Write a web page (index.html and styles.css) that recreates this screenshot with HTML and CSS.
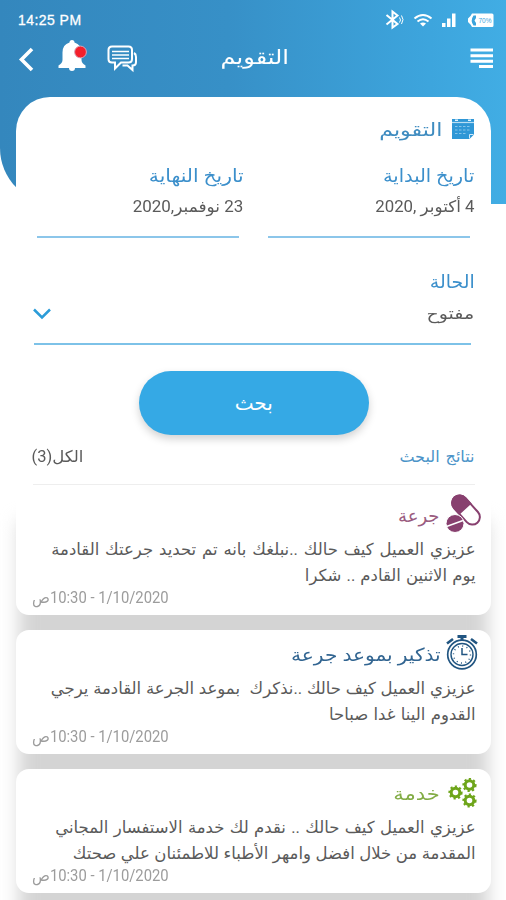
FILE: index.html
```
<!DOCTYPE html>
<html lang="ar" dir="rtl">
<head>
<meta charset="utf-8">
<title>التقويم</title>
<link rel="stylesheet" href="styles.css">
</head>
<body>
<div class="screen">
  <header class="hero">
    <div class="status">
      <svg class="status-icons" width="110" height="20" viewBox="384 10 110 20" fill="#fff">
        <path d="M386.500 15 397.500 24 392.500 27.500V11.500L397.500 15.500 386.500 24.500" fill="none" stroke="#fff" stroke-width="2"/>
        <path d="M399.500 17.500q2 2.500 0 5M401.500 15.500q3 4 0 8.500" fill="none" stroke="#fff" stroke-width="1"/>
        <path d="M414.500 18.500q8.500-7 17 0M417.500 21.500q5.500-4.500 11 0" fill="none" stroke="#fff" stroke-width="2"/>
        <path d="M420 23.500q3-2 6 0l-3 3z"/>
        <path d="M442 23h3.500v4H442zM447 18.500h3.500V27H447zM452 13.500h3.500V27H452z"/>
        <path d="M472 13.500h20a1.500 1.500 0 0 1 1.500 1.500v10.500a1.500 1.500 0 0 1-1.500 1.500h-20l-1.500-2.500-2.500-2.500v-3.500l2.500-2.500z"/>
        <path d="M473.500 15.500h2.500v2.500l-1.500 2.500 1.500 2.500v2.500h-2.500q-3.500-5 0-10z" fill="#3ba4dc"/>
        <text x="485" y="22.800" font-size="6.500" text-anchor="middle" fill="#3ba4dc" direction="ltr" font-family="Liberation Sans, sans-serif">70%</text>
      </svg>
      <span class="clock">14:25 PM</span>
    </div>
    <nav class="bar">
      <svg width="23" height="21" viewBox="0 0 23 21" fill="#fff"><path d="M.500.500h22.500v3H.500zM.500 6.200h22.500v3H.500zM.500 11.700h22.500v3H.500zM9 17h14v3H9z"/></svg>
      <h1 class="bar-title"><span>التقويم</span></h1>
      <div class="actions">
        <svg width="30" height="30" viewBox="107 41 30 30" fill="none" stroke="#fff">
          <path d="M112 43.500h16.500q3.500 0 3.500 3.500v9q0 3.500-3.500 3.500H121l-6 6v-6h-3q-3.500 0-3.500-3.500v-9q0-3.500 3.500-3.500z" stroke-width="2"/>
          <path d="M112 48.500h17M112 52h17M112 55.500h17" stroke-width="1.600"/>
          <path d="M134 50q2 1 2 4v5q0 3.500-3.500 3.500v4.500l-5-4.500h-5" stroke-width="2"/>
        </svg>
        <svg width="30" height="32" viewBox="58 40 30 32" fill="#fff">
          <path d="M69.500 42.500a2.500 2.500 0 0 1 5 0q7 2 7 10v7.500q0 3 4 5.500v2.500H58.500v-2.500q4-2.500 4-5.500v-7.500q0-8 7-10zM69 68h6q0 3-3 3t-3-3z"/>
          <circle cx="80.500" cy="52" r="5.900" fill="#f4202b" stroke="#d7a5b8" stroke-width="1"/>
        </svg>
        <svg width="16" height="26" viewBox="0 0 16 26" fill="none" stroke="#fff" stroke-width="3.600"><path d="M14 3 3.500 13.500 14 24"/></svg>
      </div>
    </nav>
  </header>

  <main class="sheet">
    <h2 class="sheet-title">
      <svg width="24" height="22" viewBox="0 0 24 22"><path d="M1 1h22v15.500L18.500 21H1z" fill="#2f97d6"/><path d="M1 4.500h22" stroke="#b9def4" stroke-width="1.200"/><path d="M4 2.300h3M17 2.300h3" stroke="#e4f4fd" stroke-width="1.500"/><path d="M4 8.500h16M4 12h16M4 15.500h12" stroke="#86c4ea" stroke-width="1" stroke-dasharray="2.500 1.500"/><path d="M18.500 20.500v-4H22.500" fill="none" stroke="#d0eafa"/></svg>
      <span>التقويم</span>
    </h2>
    <div class="dates">
      <div class="field">
        <label class="label start"><span>تاريخ البداية</span></label>
        <div class="value"><span class="d1">4 أكتوبر ,2020</span></div>
      </div>
      <div class="field">
        <label class="label end"><span>تاريخ النهاية</span></label>
        <div class="value"><span class="d2">23 نوفمبر,2020</span></div>
      </div>
    </div>
    <div class="field state">
      <label class="label st"><span>الحالة</span></label>
      <div class="value"><span class="open">مفتوح</span>
        <svg width="18" height="12" viewBox="0 0 18 12" fill="none" stroke="#2b9cd8" stroke-width="2.500"><path d="M1 1.500 9 9.500 17 1.500"/></svg>
      </div>
    </div>
    <button class="search"><span>بحث</span></button>
    <div class="results">
      <span class="results-name">نتائج البحث</span>
      <span class="results-count">الكل(3)</span>
    </div>
  </main>

  <section class="list">
    <article class="card">
      <h3 class="card-title dose">
        <svg class="pill" width="36" height="38" viewBox="446 495 36 38">
          <g transform="rotate(48 466 510)"><rect x="449" y="502.500" width="34" height="15" rx="7.500" fill="#fff" stroke="#88406f" stroke-width="2"/><path d="M465 501.500h-8.500a8.500 8.500 0 0 0 0 17h8.500z" fill="#88406f"/></g>
          <circle cx="455" cy="523.500" r="9" fill="#88406f" stroke="#fff" stroke-width="1"/><path d="M446.500 526.500 463 520.500" stroke="#fff" stroke-width="1.600"/>
        </svg>
        <span>جرعة</span>
      </h3>
      <p class="text"><span class="wide">عزيزي العميل كيف حالك ..نبلغك بانه تم تحديد جرعتك القادمة</span><br><span class="soft">يوم الاثنين القادم .. شكرا</span></p>
      <time class="time"><span>1/10/2020 - 10:30ص</span></time>
    </article>
    <article class="card">
      <h3 class="card-title remind">
        <svg class="watch" width="32" height="36" viewBox="445 636 32 36" fill="none" stroke="#215581">
          <circle cx="461" cy="655.500" r="14.300" stroke-width="1.700"/><circle cx="461" cy="655.500" r="11" stroke-width="1.400"/>
          <circle cx="461" cy="655.500" r="8.500" stroke-width="1.400" stroke-dasharray="1 3.450"/>
          <path d="M461 649v6.500h5.500" stroke-width="1.500"/><path d="M456.500 637.500h9M461 638v3.500" stroke-width="3"/><path d="M446 644.500l6-4.500M476 644.500l-6-4.500" stroke-width="2.600"/>
        </svg>
        <span>تذكير بموعد جرعة</span>
      </h3>
      <p class="text"><span class="near">عزيزي العميل كيف حالك ..نذكرك &nbsp;بموعد الجرعة القادمة يرجي</span><br><span class="mid">القدوم الينا غدا صباحا</span></p>
      <time class="time"><span>1/10/2020 - 10:30ص</span></time>
    </article>
    <article class="card">
      <h3 class="card-title service">
        <svg class="gears" width="30" height="30" viewBox="448 779 30 30" fill="none" stroke="#6ea51a">
          <g stroke-width="3"><circle cx="455.500" cy="793.500" r="4.300"/><circle cx="469.500" cy="786" r="4.300"/><circle cx="469.500" cy="801.500" r="4.300"/></g>
          <g stroke-width="2" stroke-dasharray="2.200 2.350"><circle cx="455.500" cy="793.500" r="6.100"/><circle cx="469.500" cy="786" r="6.100"/><circle cx="469.500" cy="801.500" r="6.100"/></g>
        </svg>
        <span>خدمة</span>
      </h3>
      <p class="text"><span class="mid">عزيزي العميل كيف حالك .. نقدم لك خدمة الاستفسار المجاني</span><br><span class="slight">المقدمة من خلال افضل وامهر الأطباء للاطمئنان علي صحتك</span></p>
      <time class="time"><span>1/10/2020 - 10:30ص</span></time>
    </article>
  </section>
</div>
</body>
</html>
```
FILE: styles.css
```
* { box-sizing: border-box; }
body { margin: 0; background: #fff; font-family: Roboto, "DejaVu Sans", sans-serif; color: #5a5a5a; }
h1, h2, h3, p { margin: 0; font-weight: 400; }
svg { display: block; flex: none; overflow: visible; }
span { display: inline-block; white-space: nowrap; }
.screen { width: 506px; height: 900px; overflow: hidden; position: relative; }

.hero { height: 204px; background: linear-gradient(90deg, #3487bd 0%, #3790c7 45%, #3da5dd 85%, #41ade4 100%); border-bottom-left-radius: 56px; }
.status { display: flex; justify-content: space-between; align-items: center; height: 40px; padding: 0 12px 0 18px; }
.clock { font: 14px "Liberation Sans", sans-serif; color: #fff; direction: ltr; letter-spacing: .45px; -webkit-text-stroke: .3px #fff; }
.bar { display: grid; grid-template-columns: 1fr auto 1fr; align-items: center; height: 34px; padding: 0 13px 0 18px; color: #fff; }
.bar-title { font-size: 20px; line-height: 34px; width: 68px; }
.bar-title span { transform: scaleX(1.2); transform-origin: right; }
.bar svg:first-child { margin-top: 3px; }
.actions { display: flex; justify-content: flex-end; align-items: center; }
.actions svg { margin-top: -3px; }
.actions svg:nth-child(2) { margin-right: 19px; }
.actions svg:nth-child(3) { margin: 3px 24px 0 0; }

.sheet { position: relative; height: 394px; margin: -107px 15.500px 0 16px; padding: 16px 16px 0 17px; background: #fff; border-radius: 34px 34px 0 0; }
.sheet-title { display: flex; align-items: center; gap: 8px; height: 32px; font-size: 18px; color: #3f8cc0; }
.sheet-title span { transform: scaleX(1.23); transform-origin: right; }
.dates { display: grid; grid-template-columns: 207px 206px; gap: 24px; margin-top: 18px; }
.field { position: relative; }
.label { display: block; height: 26px; line-height: 26px; font-size: 18px; color: #3b8fcb; }
.label span, .value span { transform-origin: right; }
.start span { transform: scaleX(1.07); }
.end span { transform: scaleX(1.12); }
.st span { transform: scaleX(1.05); }
.value { display: flex; justify-content: space-between; height: 49px; line-height: 36px; font-size: 16px; }
.dates .value { background: linear-gradient(#8cc6ea, #8cc6ea) no-repeat 0 100% / 202px 2px; }
.dates .field { width: 207px; }
.d1 { transform: scaleX(1.05); }
.d2 { transform: scaleX(1.06); }
.state { margin-top: 31px; }
.state .value { height: 50px; line-height: 37px; background: linear-gradient(#7dc2e8, #7dc2e8) no-repeat 1px 100% / 437px 2px; }
.state .value svg { margin-top: 13px; }
.open { transform: scaleX(1.19); }
.search { display: block; width: 230px; height: 64px; margin: 26px auto 0; padding: 0; border: 0; border-radius: 32px; background: #35a9e5; box-shadow: 0 4px 8px rgba(0,0,0,.18); color: #fff; font: 20px/64px "DejaVu Sans", sans-serif; }
.results { display: flex; justify-content: space-between; height: 50px; padding-top: 7px; font-size: 16px; line-height: 29px; border-bottom: 1px solid #eee; }
.results-name { color: #4a93c8; word-spacing: 2px; }
.results-count { letter-spacing: 0; transform: scaleX(1.03); transform-origin: right; }

.list { position: relative; display: grid; gap: 15px; margin: 0 15.500px 0 16px; }
.list::before { content: ""; position: absolute; z-index: -1; inset: 30px 3px -40px; background: #d4d4d4; filter: blur(9px); }
.card { height: 124px; padding: 0 15px 8px 16px; background: #fff; border-radius: 13px; }
.card-title { display: flex; align-items: center; height: 46px; font-size: 18px; }
.card-title span { transform-origin: right; margin-top: 2px; }
.pill { margin: -1px -6px 0 6px; }
.watch { margin: 0 -2px 0 5px; }
.gears { margin: 2px -2px 0 8px; }
.dose { color: #9a5c80; }
.remind { color: #326591; }
.remind span { transform: scaleX(1.12); }
.service { color: #82ac45; }
.service span { transform: scaleX(1.17); }
.text { height: 52px; font-size: 16.500px; line-height: 26px; white-space: nowrap; }
.text span { vertical-align: top; }
.wide { word-spacing: 1.750px; }
.soft { word-spacing: 1px; }
.near { word-spacing: .7px; }
.mid { word-spacing: 1.250px; }
.slight { word-spacing: .4px; }
.time { display: flex; justify-content: flex-end; height: 18px; line-height: 18px; font-size: 16px; color: #9c9c9c; }
.time span { transform: scaleX(.925); transform-origin: left; }
```
